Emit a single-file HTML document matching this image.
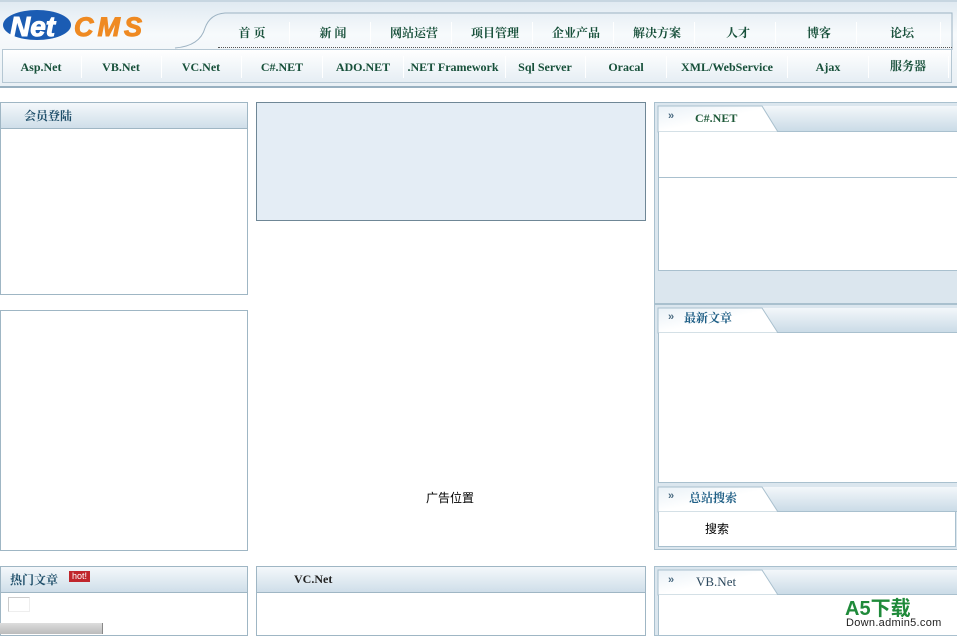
<!DOCTYPE html>
<html><head><meta charset="utf-8"><style>
*{margin:0;padding:0;box-sizing:border-box}
body{width:957px;height:634px;overflow:hidden;background:#fff;position:relative;font-family:"Liberation Serif","Noto Serif CJK SC",serif;font-size:12px}
.a{position:absolute}
.n{position:absolute;font-weight:bold;color:#17503a;font-size:12px;transform:translateX(-50%);white-space:nowrap}
.s{position:absolute;width:1px;background:#c9d6de;border-right:1px solid #fff}
.box{position:absolute;border:1px solid #9fb6c4;background:#fff}
.hd{position:absolute;left:0;right:0;top:0;height:26px;background:linear-gradient(#f4f8fb,#cfdee9);border-bottom:1px solid #9fb6c4}
.t{font-weight:bold;color:#1f4f6a;font-size:12px;position:absolute}
.m{position:absolute;font-size:11px;color:#4a6a80;font-family:'Liberation Sans';font-weight:bold}
</style></head><body>
<div class="a" style="left:0;top:0;width:957px;height:88px;background:linear-gradient(#dfe9f1,#f7fafc 40%,#e9f0f5);border-bottom:2px solid #98b0c0"></div>
<div class="a" style="left:0;top:0;width:957px;height:2px;background:#c7d6e1"></div>
<svg class="a" style="left:0;top:8px" width="957" height="42">
<path d="M175 40 Q200 38 205 20 Q210 6 225 5 L952 5 L952 42" fill="none" stroke="#9db3c3"/>
</svg>
<div class="a" style="left:218px;top:47px;width:734px;border-top:1px dotted #555"></div>
<div class="a" style="left:2px;top:49px;width:950px;height:34px;border:1px solid #b5c7d3;background:linear-gradient(#fff,#e6eef4)"></div>
<svg class="a" style="left:2px;top:6px" width="160" height="38">
<ellipse cx="35" cy="19" rx="34" ry="15" fill="#1b5cb3"/>
<text x="8" y="30" font-family="Liberation Sans" font-style="italic" font-weight="bold" font-size="28" fill="#fff" stroke="#fff" stroke-width="1">Net</text>
<text x="72" y="30" font-family="Liberation Sans" font-style="italic" font-weight="bold" font-size="27" fill="#ef8a22" stroke="#ef8a22" stroke-width="1" letter-spacing="4">CMS</text>
</svg>
<div class="n" style="left:252px;top:24px">首 页</div>
<div class="n" style="left:333px;top:24px">新 闻</div>
<div class="n" style="left:414px;top:24px">网站运营</div>
<div class="n" style="left:495px;top:24px">项目管理</div>
<div class="n" style="left:576px;top:24px">企业产品</div>
<div class="n" style="left:657px;top:24px">解决方案</div>
<div class="n" style="left:738px;top:24px">人才</div>
<div class="n" style="left:819px;top:24px">博客</div>
<div class="n" style="left:902px;top:24px">论坛</div>
<div class="s" style="left:289px;top:22px;height:22px"></div>
<div class="s" style="left:370px;top:22px;height:22px"></div>
<div class="s" style="left:451px;top:22px;height:22px"></div>
<div class="s" style="left:532px;top:22px;height:22px"></div>
<div class="s" style="left:613px;top:22px;height:22px"></div>
<div class="s" style="left:694px;top:22px;height:22px"></div>
<div class="s" style="left:775px;top:22px;height:22px"></div>
<div class="s" style="left:856px;top:22px;height:22px"></div>
<div class="s" style="left:940px;top:22px;height:22px"></div>
<div class="n" style="left:41px;top:60px">Asp.Net</div>
<div class="n" style="left:121px;top:60px">VB.Net</div>
<div class="n" style="left:201px;top:60px">VC.Net</div>
<div class="n" style="left:282px;top:60px">C#.NET</div>
<div class="n" style="left:363px;top:60px">ADO.NET</div>
<div class="n" style="left:453px;top:60px">.NET Framework</div>
<div class="n" style="left:545px;top:60px">Sql Server</div>
<div class="n" style="left:626px;top:60px">Oracal</div>
<div class="n" style="left:727px;top:60px">XML/WebService</div>
<div class="n" style="left:828px;top:60px">Ajax</div>
<div class="n" style="left:908px;top:57px">服务器</div>
<div class="s" style="left:81px;top:56px;height:22px"></div>
<div class="s" style="left:161px;top:56px;height:22px"></div>
<div class="s" style="left:241px;top:56px;height:22px"></div>
<div class="s" style="left:322px;top:56px;height:22px"></div>
<div class="s" style="left:403px;top:56px;height:22px"></div>
<div class="s" style="left:505px;top:56px;height:22px"></div>
<div class="s" style="left:585px;top:56px;height:22px"></div>
<div class="s" style="left:666px;top:56px;height:22px"></div>
<div class="s" style="left:787px;top:56px;height:22px"></div>
<div class="s" style="left:868px;top:56px;height:22px"></div>
<div class="s" style="left:948px;top:56px;height:22px"></div>

<div class="box" style="left:0;top:102px;width:248px;height:193px"><div class="hd"></div><div class="t" style="left:23px;top:4px">会员登陆</div></div>
<div class="box" style="left:0;top:310px;width:248px;height:241px"></div>
<div class="box" style="left:0;top:566px;width:248px;height:70px"><div class="hd"></div><div class="t" style="left:9px;top:4px">热门文章</div>
<div class="a" style="left:68px;top:4px;width:21px;height:11px;background:#c0262c;color:#fff;font-size:9px;line-height:11px;text-align:center;font-family:'Liberation Sans'">hot!</div>
<div class="a" style="left:7px;top:30px;width:22px;height:15px;border:1px solid #ccc;border-right-color:#eee;border-bottom-color:#eee"></div>
</div>
<div class="a" style="left:0;top:623px;width:103px;height:11px;background:linear-gradient(#ddd,#bbb);border-right:1px solid #888"></div>

<div class="a" style="left:256px;top:102px;width:390px;height:119px;background:#e4edf5;border:1px solid #6f8796"></div>
<div class="a" style="left:426px;top:489px;font-family:'Liberation Sans','Noto Sans CJK SC',sans-serif;font-size:12px">广告位置</div>
<div class="box" style="left:256px;top:566px;width:390px;height:70px"><div class="hd"></div><div class="t" style="left:37px;top:5px;color:#222">VC.Net</div></div>

<div class="a" style="left:654px;top:102px;width:303px;height:202px;background:#dbe6ee;border:1px solid #a9c0ce;border-right:none"></div>
<div class="a" style="left:654px;top:304px;width:303px;height:246px;background:#dbe6ee;border:1px solid #a9c0ce;border-right:none"></div>
<div class="a" style="left:654px;top:566px;width:303px;height:70px;background:#dbe6ee;border:1px solid #a9c0ce;border-right:none"></div>

<svg class="a" style="left:0;top:0" width="957" height="634">
<defs><linearGradient id="g" x1="0" y1="0" x2="0" y2="1"><stop offset="0" stop-color="#f3f7fa"/><stop offset="1" stop-color="#c9dae6"/></linearGradient>
<linearGradient id="w" x1="0" y1="0" x2="1" y2="1"><stop offset="0" stop-color="#e9f1f7"/><stop offset=".5" stop-color="#fff"/></linearGradient></defs>
<g><rect x="658" y="106" width="299" height="26" fill="url(#g)"/>
<path d="M658 132 L658 106 L762 106 L778 132 Z" fill="url(#w)" stroke="#a9c0ce"/>
<line x1="778" y1="131.5" x2="957" y2="131.5" stroke="#a9c0ce"/></g>
<g><rect x="658" y="308" width="299" height="25" fill="url(#g)"/>
<path d="M658 333 L658 308 L762 308 L778 333 Z" fill="url(#w)" stroke="#a9c0ce"/>
<line x1="778" y1="332.5" x2="957" y2="332.5" stroke="#a9c0ce"/></g>
<g><rect x="658" y="487" width="299" height="25" fill="url(#g)"/>
<path d="M658 512 L658 487 L762 487 L778 512 Z" fill="url(#w)" stroke="#a9c0ce"/>
<line x1="778" y1="511.5" x2="957" y2="511.5" stroke="#a9c0ce"/></g>
<g><rect x="658" y="570" width="299" height="25" fill="url(#g)"/>
<path d="M658 595 L658 570 L762 570 L778 595 Z" fill="url(#w)" stroke="#a9c0ce"/>
<line x1="778" y1="594.5" x2="957" y2="594.5" stroke="#a9c0ce"/></g>
</svg>
<div class="a" style="left:658px;top:132px;width:299px;height:139px;background:#fff;border:1px solid #a9c0ce;border-top:none;border-right:none"></div>
<div class="a" style="left:658px;top:177px;width:299px;height:1px;background:#a9c0ce"></div>
<div class="a" style="left:658px;top:333px;width:299px;height:150px;background:#fff;border-left:1px solid #a9c0ce;border-bottom:1px solid #a9c0ce"></div>
<div class="a" style="left:658px;top:512px;width:298px;height:35px;background:#fff;border:1px solid #a9c0ce;border-top:none"></div>
<div class="a" style="left:658px;top:595px;width:299px;height:40px;background:#fff;border-left:1px solid #a9c0ce"></div>

<div class="m" style="left:668px;top:110px">»</div>
<div class="t" style="left:695px;top:111px;color:#1f5a3a">C#.NET</div>
<div class="m" style="left:668px;top:311px">»</div>
<div class="t" style="left:684px;top:309px;color:#1f5f86">最新文章</div>
<div class="m" style="left:668px;top:490px">»</div>
<div class="t" style="left:689px;top:489px;color:#1f5f86">总站搜索</div>
<div class="a" style="left:705px;top:520px;font-family:'Liberation Sans','Noto Sans CJK SC',sans-serif;font-size:12px">搜索</div>
<div class="m" style="left:668px;top:574px">»</div>
<div class="t" style="left:696px;top:574px;color:#2d4a5e;font-weight:normal;font-size:13px">VB.Net</div>

<div class="a" style="left:845px;top:598px;font-family:'Liberation Sans','Noto Sans CJK SC',sans-serif;font-weight:bold;font-size:20px;color:#1f8a3a;line-height:22px">A5下载</div>
<div class="a" style="left:846px;top:617px;font-family:'Liberation Sans',sans-serif;font-size:11px;color:#222;line-height:12px;letter-spacing:.3px">Down.admin5.com</div>
</body></html>
